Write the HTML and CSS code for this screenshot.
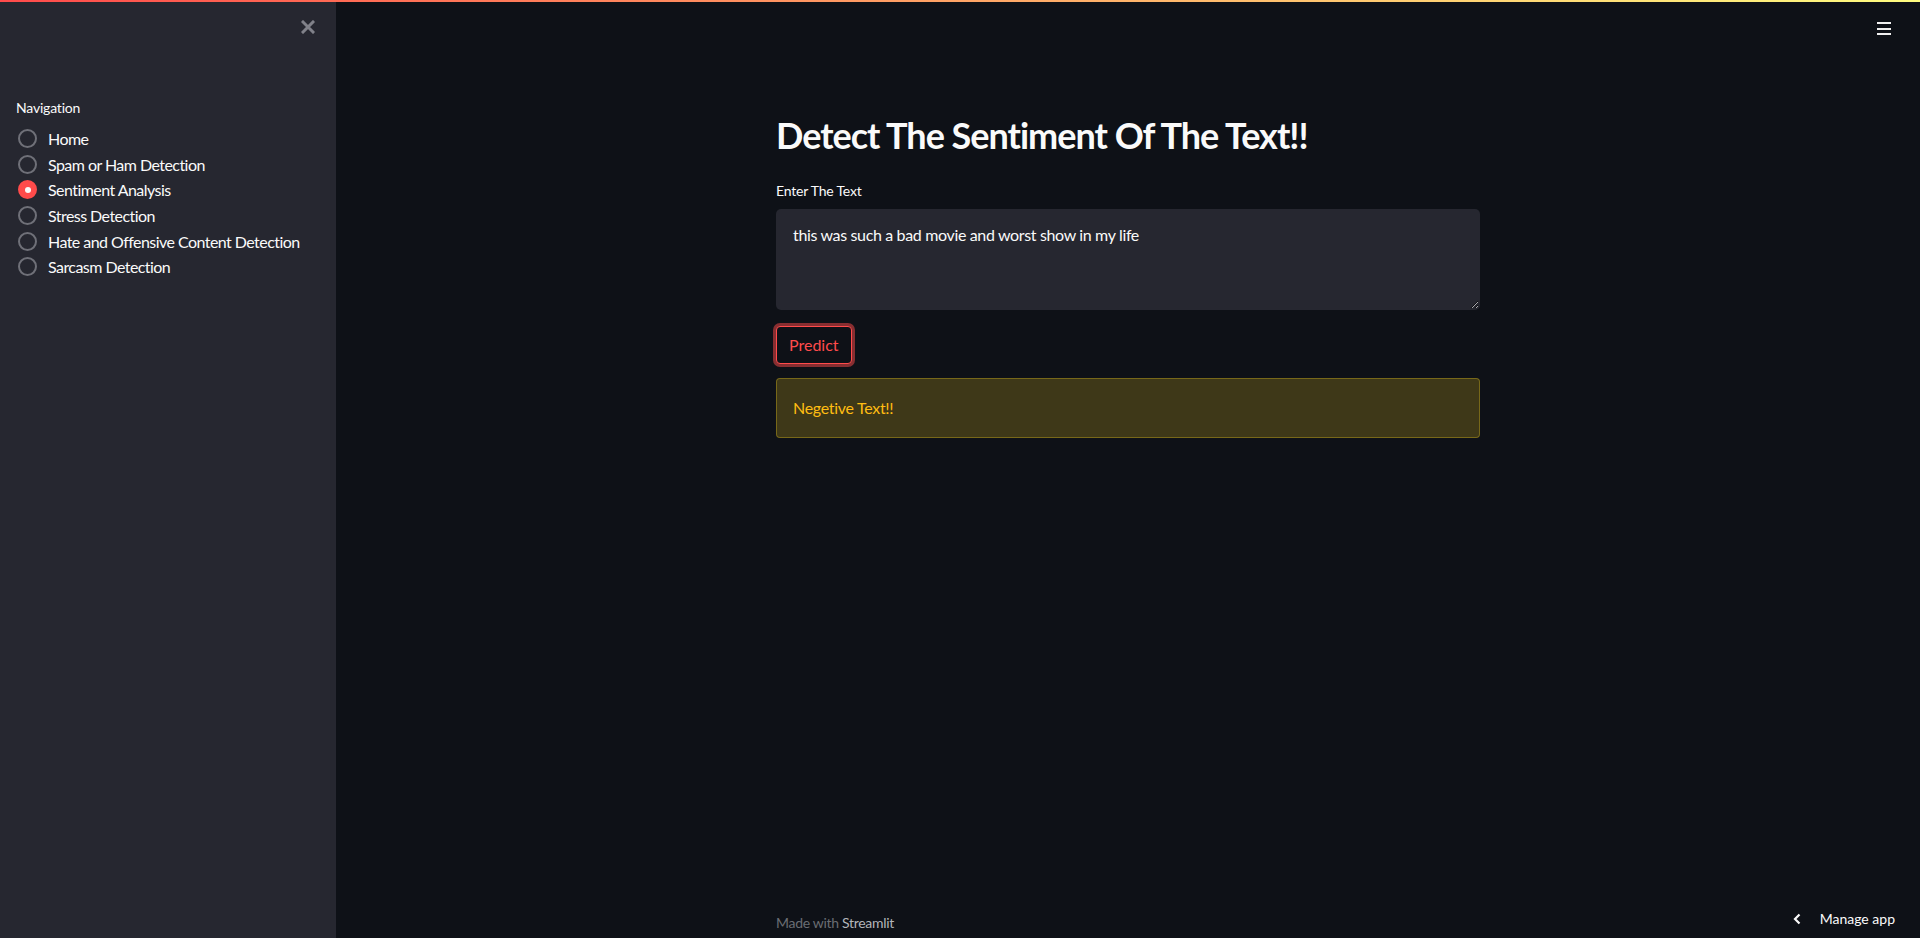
FILE: index.html
```html
<!DOCTYPE html>
<html lang="en">
<head>
<meta charset="utf-8">
<title>Sentiment Analysis</title>
<link rel="stylesheet" href="styles.css">
</head>
<body>
<div class="decoration"></div>
<div class="app">
  <aside class="sidebar">
    <div class="sidebar-head">
      <button class="close-btn" aria-label="Close sidebar">
        <svg width="14" height="14" viewBox="0 0 14 14"><path d="M2 2 L12 12 M12 2 L2 12" stroke="#808189" stroke-width="3" stroke-linecap="square"/></svg>
      </button>
    </div>
    <div class="nav">
      <div class="nav-label">Navigation</div>
      <div class="radio-list">
        <label class="radio"><span class="dot"></span><span class="radio-text">Home</span></label>
        <label class="radio"><span class="dot"></span><span class="radio-text">Spam or Ham Detection</span></label>
        <label class="radio selected"><span class="dot"></span><span class="radio-text">Sentiment Analysis</span></label>
        <label class="radio"><span class="dot"></span><span class="radio-text">Stress Detection</span></label>
        <label class="radio"><span class="dot"></span><span class="radio-text">Hate and Offensive Content Detection</span></label>
        <label class="radio"><span class="dot"></span><span class="radio-text">Sarcasm Detection</span></label>
      </div>
    </div>
  </aside>
  <main class="main">
    <button class="menu-btn" aria-label="Menu">
      <span></span><span></span><span></span>
    </button>
    <div class="block">
      <h1 class="title">Detect The Sentiment Of The Text!!</h1>
      <div class="field">
        <label class="field-label">Enter The Text</label>
        <textarea class="textarea" readonly>this was such a bad movie and worst show in my life</textarea>
      </div>
      <button class="predict">Predict</button>
      <div class="alert">Negetive Text!!</div>
    </div>
    <footer class="footer">Made with <span class="brand">Streamlit</span></footer>
    <div class="manage">
      <svg width="8" height="12" viewBox="0 0 8 12"><path d="M6.5 1.5 L2 6 L6.5 10.5" fill="none" stroke="#fafafa" stroke-width="2.2"/></svg>
      <span>Manage app</span>
    </div>
  </main>
</div>
</body>
</html>
```
FILE: styles.css
```css
* { box-sizing: border-box; }
html, body { margin: 0; padding: 0; height: 100%; }
body {
  background: #0e1117;
  color: #fafafa;
  font-family: Lato, "Noto Sans", sans-serif;
  overflow: hidden;
}
.decoration {
  position: absolute;
  top: 0; left: 0; right: 0;
  height: 2px;
  background: linear-gradient(90deg, #ff4b4b, #fffd80);
  z-index: 5;
}
.app { display: flex; height: 938px; }
.sidebar {
  width: 336px;
  flex-shrink: 0;
  background: #262730;
  padding: 0 16px;
}
.sidebar-head {
  display: flex;
  justify-content: flex-end;
  padding-top: 20px;
  height: 97px;
}
.close-btn {
  background: none; border: 0; padding: 0;
  width: 14px; height: 14px;
  margin-right: 5px;
  cursor: pointer;
  display: flex;
}
.nav-label { font-size: 14px; line-height: 22px; margin-bottom: 7px; letter-spacing: -0.2px; }
.radio-list { display: flex; flex-direction: column; }
.radio {
  display: flex;
  align-items: center;
  height: 25.6px;
  font-size: 16px;
  letter-spacing: -0.55px;
  white-space: nowrap;
}
.dot {
  width: 19px; height: 19px;
  border-radius: 50%;
  border: 2px solid #6f7078;
  margin-left: 2px;
  margin-right: 11px;
  flex-shrink: 0;
  display: flex; align-items: center; justify-content: center;
}
.radio.selected .dot { background: #ff4b4b; border-color: #ff4b4b; }
.radio.selected .dot::after {
  content: ""; width: 6px; height: 6px; border-radius: 50%; background: #fafafa;
}
.main {
  flex: 1;
  position: relative;
  display: flex;
  flex-direction: column;
  align-items: center;
}
.menu-btn {
  position: absolute;
  top: 22px; right: 29px;
  width: 14px; height: 13px;
  background: none; border: 0; padding: 0;
  display: flex; flex-direction: column; justify-content: space-between;
}
.menu-btn span { display: block; height: 2px; background: #f0f0f0; }
.block {
  width: 736px;
  padding: 96px 16px 0;
  display: flex;
  flex-direction: column;
  align-items: flex-start;
}
.title {
  margin: 0;
  font-size: 36px;
  font-weight: 700;
  line-height: 43px;
  letter-spacing: -1px;
  padding: 18px 0 23px;
  width: 100%;
}
.field { width: 100%; display: flex; flex-direction: column; }
.field-label { font-size: 14px; line-height: 22px; margin-bottom: 7px; letter-spacing: -0.2px; }
.textarea {
  width: 100%;
  height: 101px;
  background: #262730;
  border: 1px solid transparent;
  border-radius: 5px;
  color: #fafafa;
  font-family: inherit;
  font-size: 16px;
  line-height: 25.6px;
  letter-spacing: -0.35px;
  padding: 12px 16px;
  resize: vertical;
  outline: none;
}
.predict {
  margin-top: 16px;
  height: 38.4px;
  padding: 4px 12px;
  background: #0e1117;
  color: #ff4b4b;
  border: 1px solid #ff4b4b;
  border-radius: 4px;
  font-family: inherit;
  font-size: 16px;
  line-height: 25.6px;
  box-shadow: 0 0 0 3px rgba(255, 75, 75, 0.5);
}
.alert {
  margin-top: 14px;
  width: 100%;
  padding: 16px;
  font-size: 16px;
  line-height: 25.6px;
  letter-spacing: -0.3px;
  background: rgba(255, 215, 30, 0.2);
  border: 1px solid rgba(255, 215, 30, 0.3);
  border-radius: 4px;
  color: #ffbd12;
}
.footer {
  margin-top: auto;
  width: 704px;
  font-size: 14px;
  line-height: 22px;
  letter-spacing: -0.3px;
  padding-bottom: 4px;
  color: #6a6d73;
}
.footer .brand { color: #b3b5ba; }
.manage {
  position: absolute;
  right: 25px; bottom: 8px;
  display: flex; align-items: center; gap: 19px;
  font-size: 14px;
  line-height: 22px;
  color: #fafafa;
}
```
